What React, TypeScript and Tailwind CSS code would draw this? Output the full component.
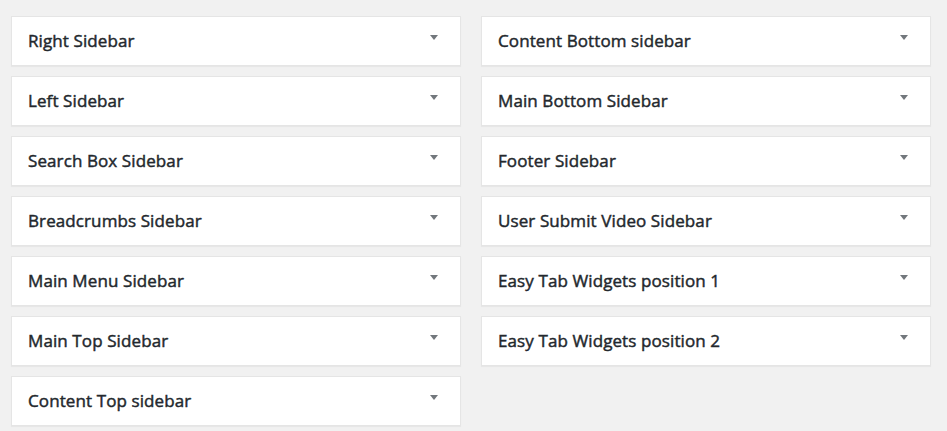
import React from "react";

const left = [
  "Right Sidebar",
  "Left Sidebar",
  "Search Box Sidebar",
  "Breadcrumbs Sidebar",
  "Main Menu Sidebar",
  "Main Top Sidebar",
  "Content Top sidebar",
];
const right = [
  "Content Bottom sidebar",
  "Main Bottom Sidebar",
  "Footer Sidebar",
  "User Submit Video Sidebar",
  "Easy Tab Widgets position 1",
  "Easy Tab Widgets position 2",
];

function Box({ title }: { title: string }) {
  return (
    <div className="relative h-[50px] bg-white border border-[#e5e5e5] shadow-[0_1px_1px_rgba(0,0,0,0.04)] flex items-center pl-[16px]">
      <span className="text-[17px] font-normal text-[#23282d] leading-[20px] [-webkit-text-stroke:0.45px_#23282d] tracking-[0.1px]">
        {title}
      </span>
      <svg className="absolute right-[22px] top-[18px]" width="8" height="5" viewBox="0 0 8 5">
        <polygon points="0,0 8,0 4,5" fill="#72777c" />
      </svg>
    </div>
  );
}

export default function App() {
  return (
    <div
      className="w-[947px] h-[431px] bg-[#f1f1f1] overflow-hidden"
      style={{ fontFamily: '"Open Sans", "Noto Sans", sans-serif' }}
    >
      <div className="flex gap-[20px] pl-[11px] pt-[16px]">
        <div className="w-[450px] flex flex-col gap-[10px]">
          {left.map((t) => (
            <Box key={t} title={t} />
          ))}
        </div>
        <div className="w-[450px] flex flex-col gap-[10px]">
          {right.map((t) => (
            <Box key={t} title={t} />
          ))}
        </div>
      </div>
    </div>
  );
}
